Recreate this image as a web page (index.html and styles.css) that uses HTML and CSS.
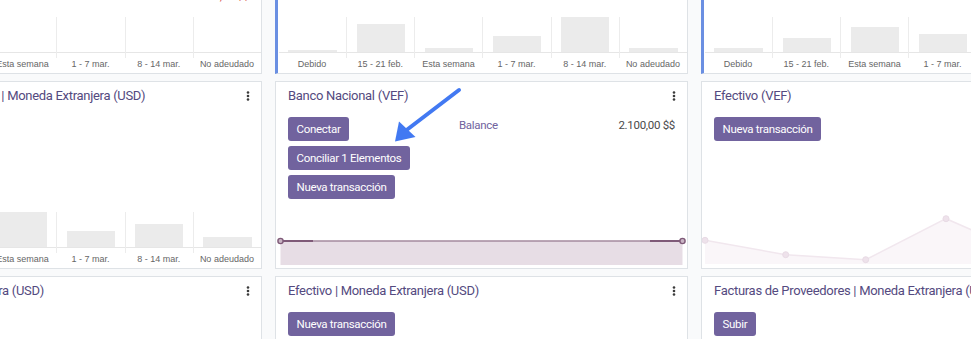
FILE: index.html
```html
<!DOCTYPE html>
<html>
<head>
  <meta name="viewport" content="width=device-width, initial-scale=1.0">
  <title>Tablero de contabilidad</title>
  <link rel="stylesheet" href="styles.css">
</head>
<body>
  <div class="dashboard">

    <!-- fila 1 -->
    <div class="card">
      <div class="card-head">
        <span class="card-title">Facturas de Clientes</span>
        <svg class="kebab" width="4" height="10" viewBox="0 0 4 10"><circle cx="2" cy="1.5" r="1.3"/><circle cx="2" cy="5" r="1.3"/><circle cx="2" cy="8.5" r="1.3"/></svg>
      </div>
      <div class="card-body">
        <div class="actions">
          <button class="btn">Nueva factura</button>
        </div>
        <div class="stats">
          <div class="stat"><span class="stat-label">3 Facturas para validar</span><span class="stat-value">1.540,00 $$</span></div>
          <div class="stat"><span class="stat-label">2 Pagos pendientes</span><span class="stat-value">870,00 $$</span></div>
          <div class="stat"><span class="stat-label">Por cobrar</span><span class="stat-value">2.410,00 $$</span></div>
          <div class="stat"><span class="stat-label">Atrasado</span><span class="stat-value late">5.225,00 $$</span></div>
        </div>
      </div>
      <div class="bar-chart shifted">
        <div class="plot">
          <div class="plot-col"><div class="plot-area"><div class="bar" style="height:20px"></div></div><div class="tick"></div></div>
          <div class="plot-col"><div class="plot-area"><div class="bar" style="height:12px"></div></div><div class="tick"></div></div>
          <div class="plot-col"><div class="plot-area"></div><div class="tick"></div></div>
          <div class="plot-col"><div class="plot-area"></div><div class="tick"></div></div>
          <div class="plot-col"><div class="plot-area"></div><div class="tick"></div></div>
          <div class="plot-col"><div class="plot-area"></div><div class="tick"></div></div>
        </div>
        <div class="axis"><span>Debido</span><span>15 - 21 feb.</span><span>Esta semana</span><span>1 - 7 mar.</span><span>8 - 14 mar.</span><span>No adeudado</span></div>
      </div>
    </div>

    <div class="card marked">
      <div class="card-head">
        <span class="card-title">Facturas de Proveedores</span>
        <svg class="kebab" width="4" height="10" viewBox="0 0 4 10"><circle cx="2" cy="1.5" r="1.3"/><circle cx="2" cy="5" r="1.3"/><circle cx="2" cy="8.5" r="1.3"/></svg>
      </div>
      <div class="card-body">
        <div class="actions">
          <button class="btn">Subir</button>
        </div>
        <div class="stats">
          <div class="stat"><span class="stat-label">Por pagar</span><span class="stat-value">3.120,00 $$</span></div>
        </div>
      </div>
      <div class="bar-chart">
        <div class="plot">
          <div class="plot-col"><div class="plot-area"><div class="bar" style="height:2px"></div></div><div class="tick"></div></div>
          <div class="plot-col"><div class="plot-area"><div class="bar" style="height:28px"></div></div><div class="tick"></div></div>
          <div class="plot-col"><div class="plot-area"><div class="bar" style="height:4px"></div></div><div class="tick"></div></div>
          <div class="plot-col"><div class="plot-area"><div class="bar" style="height:16px"></div></div><div class="tick"></div></div>
          <div class="plot-col"><div class="plot-area"><div class="bar" style="height:35px"></div></div><div class="tick"></div></div>
          <div class="plot-col"><div class="plot-area"><div class="bar" style="height:4px"></div></div><div class="tick"></div></div>
        </div>
        <div class="axis"><span>Debido</span><span>15 - 21 feb.</span><span>Esta semana</span><span>1 - 7 mar.</span><span>8 - 14 mar.</span><span>No adeudado</span></div>
      </div>
    </div>

    <div class="card marked">
      <div class="card-head">
        <span class="card-title">Gastos varios</span>
        <svg class="kebab" width="4" height="10" viewBox="0 0 4 10"><circle cx="2" cy="1.5" r="1.3"/><circle cx="2" cy="5" r="1.3"/><circle cx="2" cy="8.5" r="1.3"/></svg>
      </div>
      <div class="card-body">
        <div class="actions">
          <button class="btn">Subir</button>
        </div>
        <div class="stats"></div>
      </div>
      <div class="bar-chart">
        <div class="plot">
          <div class="plot-col"><div class="plot-area"><div class="bar" style="height:4px"></div></div><div class="tick"></div></div>
          <div class="plot-col"><div class="plot-area"><div class="bar" style="height:14px"></div></div><div class="tick"></div></div>
          <div class="plot-col"><div class="plot-area"><div class="bar" style="height:25px"></div></div><div class="tick"></div></div>
          <div class="plot-col"><div class="plot-area"><div class="bar" style="height:18px"></div></div><div class="tick"></div></div>
          <div class="plot-col"><div class="plot-area"><div class="bar" style="height:10px"></div></div><div class="tick"></div></div>
          <div class="plot-col"><div class="plot-area"><div class="bar" style="height:6px"></div></div><div class="tick"></div></div>
        </div>
        <div class="axis"><span>Debido</span><span>15 - 21 feb.</span><span>Esta semana</span><span>1 - 7 mar.</span><span>8 - 14 mar.</span><span>No adeudado</span></div>
      </div>
    </div>

    <!-- fila 2 -->
    <div class="card">
      <div class="card-head">
        <span class="card-title">Facturas de Proveedores | Moneda Extranjera (USD)</span>
        <svg class="kebab" width="4" height="10" viewBox="0 0 4 10"><circle cx="2" cy="1.5" r="1.3"/><circle cx="2" cy="5" r="1.3"/><circle cx="2" cy="8.5" r="1.3"/></svg>
      </div>
      <div class="card-body">
        <div class="actions">
          <button class="btn">Subir</button>
        </div>
        <div class="stats"></div>
      </div>
      <div class="bar-chart shifted">
        <div class="plot">
          <div class="plot-col"><div class="plot-area"><div class="bar" style="height:8px"></div></div><div class="tick"></div></div>
          <div class="plot-col"><div class="plot-area"><div class="bar" style="height:14px"></div></div><div class="tick"></div></div>
          <div class="plot-col"><div class="plot-area"><div class="bar" style="height:35px"></div></div><div class="tick"></div></div>
          <div class="plot-col"><div class="plot-area"><div class="bar" style="height:16px"></div></div><div class="tick"></div></div>
          <div class="plot-col"><div class="plot-area"><div class="bar" style="height:23px"></div></div><div class="tick"></div></div>
          <div class="plot-col"><div class="plot-area"><div class="bar" style="height:10px"></div></div><div class="tick"></div></div>
        </div>
        <div class="axis"><span>Debido</span><span>15 - 21 feb.</span><span>Esta semana</span><span>1 - 7 mar.</span><span>8 - 14 mar.</span><span>No adeudado</span></div>
      </div>
    </div>

    <div class="card">
      <div class="card-head">
        <span class="card-title">Banco Nacional (VEF)</span>
        <svg class="kebab" width="4" height="10" viewBox="0 0 4 10"><circle cx="2" cy="1.5" r="1.3"/><circle cx="2" cy="5" r="1.3"/><circle cx="2" cy="8.5" r="1.3"/></svg>
      </div>
      <div class="card-body">
        <div class="actions">
          <button class="btn">Conectar</button>
          <button class="btn">Conciliar 1 Elementos</button>
          <button class="btn">Nueva transacción</button>
        </div>
        <div class="stats">
          <div class="stat"><span class="stat-label">Balance</span><span class="stat-value">2.100,00 $$</span></div>
        </div>
      </div>
      <svg class="line-chart" width="411" height="50" viewBox="0 0 411 50">
        <rect x="4.5" y="26" width="402" height="24" fill="#e7dde5"/>
        <line x1="4.5" y1="26" x2="406.5" y2="26" stroke="#a48a9e" stroke-width="1.5"/>
        <line x1="4.5" y1="26" x2="37" y2="26" stroke="#7f5a78" stroke-width="2"/>
        <line x1="374" y1="26" x2="406.5" y2="26" stroke="#7f5a78" stroke-width="2"/>
        <circle cx="4.5" cy="26" r="2.6" fill="#c9b4c4" stroke="#7f5a78" stroke-width="1.4"/>
        <circle cx="406.5" cy="26" r="2.6" fill="#c9b4c4" stroke="#7f5a78" stroke-width="1.4"/>
      </svg>
    </div>

    <div class="card">
      <div class="card-head">
        <span class="card-title">Efectivo (VEF)</span>
        <svg class="kebab" width="4" height="10" viewBox="0 0 4 10"><circle cx="2" cy="1.5" r="1.3"/><circle cx="2" cy="5" r="1.3"/><circle cx="2" cy="8.5" r="1.3"/></svg>
      </div>
      <div class="card-body">
        <div class="actions">
          <button class="btn">Nueva transacción</button>
        </div>
        <div class="stats"></div>
      </div>
      <svg class="line-chart" width="411" height="50" viewBox="0 0 411 50">
        <polygon points="3,25.3 83.7,39.7 163.7,44.7 244,3.7 324.3,39 404.5,30 404.5,49 3,49" fill="#faf6f9"/>
        <polyline points="3,25.3 83.7,39.7 163.7,44.7 244,3.7 324.3,39 404.5,30" fill="none" stroke="#f1e7ee" stroke-width="1.5"/>
        <g fill="#eee2eb" stroke="#e8dbe5" stroke-width="1">
          <circle cx="3" cy="25.3" r="3"/><circle cx="83.7" cy="39.7" r="3"/><circle cx="163.7" cy="44.7" r="3"/>
          <circle cx="244" cy="3.7" r="3"/><circle cx="324.3" cy="39" r="3"/><circle cx="404.5" cy="30" r="3"/>
        </g>
      </svg>
    </div>

    <!-- fila 3 -->
    <div class="card">
      <div class="card-head">
        <span class="card-title">Banco | Moneda Extranjera (USD)</span>
        <svg class="kebab" width="4" height="10" viewBox="0 0 4 10"><circle cx="2" cy="1.5" r="1.3"/><circle cx="2" cy="5" r="1.3"/><circle cx="2" cy="8.5" r="1.3"/></svg>
      </div>
      <div class="card-body">
        <div class="actions">
          <button class="btn">Conectar</button>
        </div>
        <div class="stats"></div>
      </div>
    </div>

    <div class="card">
      <div class="card-head">
        <span class="card-title">Efectivo | Moneda Extranjera (USD)</span>
        <svg class="kebab" width="4" height="10" viewBox="0 0 4 10"><circle cx="2" cy="1.5" r="1.3"/><circle cx="2" cy="5" r="1.3"/><circle cx="2" cy="8.5" r="1.3"/></svg>
      </div>
      <div class="card-body">
        <div class="actions">
          <button class="btn">Nueva transacción</button>
        </div>
        <div class="stats"></div>
      </div>
    </div>

    <div class="card">
      <div class="card-head">
        <span class="card-title">Facturas de Proveedores | Moneda Extranjera (USD)</span>
        <svg class="kebab" width="4" height="10" viewBox="0 0 4 10"><circle cx="2" cy="1.5" r="1.3"/><circle cx="2" cy="5" r="1.3"/><circle cx="2" cy="8.5" r="1.3"/></svg>
      </div>
      <div class="card-body">
        <div class="actions">
          <button class="btn">Subir</button>
        </div>
        <div class="stats"></div>
      </div>
    </div>

  </div>

  <svg class="arrow" width="971" height="339" viewBox="0 0 971 339">
    <line x1="459" y1="90" x2="404" y2="132" stroke="#4279f2" stroke-width="4" stroke-linecap="round"/>
    <polygon points="395,141.5 399,121.5 415.5,137" fill="#4279f2"/>
  </svg>
</body>
</html>
```

FILE: styles.css
```css
* {
  box-sizing: border-box;
}
body {
  margin: 0;
  background: #f9fafb;
  font-family: Roboto, "Liberation Sans", sans-serif;
  overflow: hidden;
  position: relative;
  height: 339px;
}
.dashboard {
  display: grid;
  grid-template-columns: repeat(3, 413px);
  grid-auto-rows: 188px;
  gap: 7px 13px;
  margin: -114px 0 0 -151px;
}
.card {
  background: #fff;
  border: 1px solid #dee2e6;
  display: flex;
  flex-direction: column;
  overflow: hidden;
}
.card.marked {
  border-left: 3px solid #6a8fe2;
}
.card-head {
  display: flex;
  justify-content: space-between;
  align-items: center;
  padding: 4px 12px 0;
}
.card-title {
  font-size: 13px;
  letter-spacing: -0.3px;
  line-height: 20px;
  color: #544a80;
  white-space: nowrap;
}
.kebab {
  fill: #3a3a3a;
  margin-right: -1px;
  flex-shrink: 0;
}
.card-body {
  display: grid;
  grid-template-columns: 147px 1fr;
  column-gap: 24px;
  padding: 11px 12px 0;
}
.actions {
  display: flex;
  flex-direction: column;
  align-items: flex-start;
  gap: 5px;
}
.btn {
  background: #71639e;
  color: #fff;
  border: 0;
  border-radius: 3px;
  height: 24px;
  padding: 0 8.5px;
  font-family: Roboto, "Liberation Sans", sans-serif;
  font-size: 11.5px;
  letter-spacing: -0.3px;
  white-space: nowrap;
}
.stats {
  display: flex;
  flex-direction: column;
  gap: 6px;
}
.stat {
  display: flex;
  justify-content: space-between;
  font-size: 11.5px;
  letter-spacing: -0.3px;
  line-height: 16px;
  white-space: nowrap;
}
.stat-label {
  color: #71639e;
}
.stat-value {
  color: #4a4a4a;
}
.stat-value.late {
  color: #d9534f;
}

.bar-chart {
  margin-top: auto;
  padding-bottom: 3px;
}
.bar-chart.shifted {
  margin-left: 2px;
}
.plot {
  display: grid;
  grid-template-columns: repeat(6, 1fr);
}
.plot-col {
  border-left: 1px solid #ececec;
}
.plot-col:first-child {
  border-left-color: transparent;
}
.plot-area {
  height: 36px;
  border-bottom: 1px solid #e6e6e6;
  display: flex;
  align-items: flex-end;
  justify-content: center;
}
.bar {
  width: 72%;
  background: #ebebeb;
}
.tick {
  height: 5px;
}
.axis {
  display: grid;
  grid-template-columns: repeat(6, 1fr);
  font-family: "Liberation Sans", Arial, sans-serif;
  font-size: 9px;
  line-height: 12px;
  color: #666;
  text-align: center;
  white-space: nowrap;
}

.line-chart {
  display: block;
  margin-top: auto;
  margin-bottom: 3px;
}

.arrow {
  position: absolute;
  left: 0;
  top: 0;
  pointer-events: none;
}
```
